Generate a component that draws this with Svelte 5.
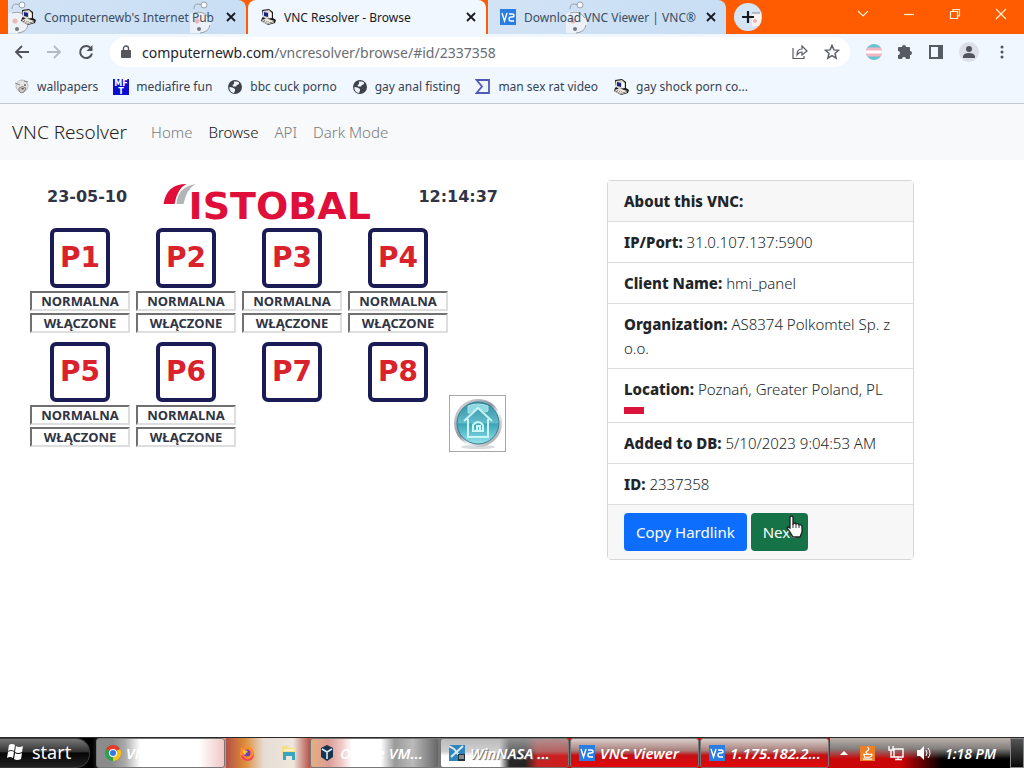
<script>
  const tabs = [
    { title: "Computernewb's Internet Pub", icon: 'pc', active: false, ghosts: [0, 182] },
    { title: 'VNC Resolver - Browse', icon: 'pc', active: true, ghosts: [] },
    { title: 'Download VNC Viewer | VNC®', icon: 'vnc', active: false, ghosts: [78] }
  ];
  const bookmarks = [
    { label: 'wallpapers', icon: 'face' },
    { label: 'mediafire fun', icon: 'mft' },
    { label: 'bbc cuck porno', icon: 'globe' },
    { label: 'gay anal fisting', icon: 'globe' },
    { label: 'man sex rat video', icon: 'sigma' },
    { label: 'gay shock porn co...', icon: 'pc' }
  ];
  const stations = [1, 2, 3, 4, 5, 6, 7, 8].map((n) => ({ name: 'P' + n, status: n < 7 }));
  const details = [
    ['IP/Port:', '31.0.107.137:5900'],
    ['Client Name:', 'hmi_panel'],
    ['Organization:', 'AS8374 Polkomtel Sp. z o.o.'],
    ['Location:', 'Poznań, Greater Poland, PL'],
    ['Added to DB:', '5/10/2023 9:04:53 AM'],
    ['ID:', '2337358']
  ];
</script>

{#snippet icon(name)}
  {#if name === 'pc'}
    <svg class="ico" viewBox="0 0 16 16" aria-hidden="true">
      <path d="M2 1 9 0l4 3v6l3 2-1 3-7 2-7-4 1-3 1-1z" fill="#1b1b1f" />
      <path d="M3 2l6-1 3 3v5l-6 1-3-2z" fill="#d9d7cd" />
      <path d="M4 3l4 1v4L4 7z" fill="#1b2288" />
      <path d="M9 3l2 1v4l-2 1z" fill="#fff" />
      <path d="M1.500 11l5-1.500 8 2.500-7 2.500z" fill="#ece9df" />
      <path d="M2 12.500l6 2.500 6-2" fill="none" stroke="#c9c6bb" />
      <path d="M4 11.500l5 1.500" stroke="#77746b" stroke-dasharray="1 1" />
    </svg>
  {:else if name === 'vnc'}
    <svg class="ico" viewBox="0 0 16 16" aria-hidden="true">
      <path fill="#2a7de1" d="M0 0h16v16H0z" />
      <path d="M2 4l2.500 8L7 4M9 5h3q2 0 2 1.500T12 8h-1q-2 0-2 2t2 2h3" fill="none" stroke="#fff" stroke-width="1.400" />
    </svg>
  {:else if name === 'face'}
    <svg class="ico" viewBox="0 0 16 16" aria-hidden="true">
      <circle cx="8" cy="7" r="6" fill="#e5e5e3" stroke="#bbbdbb" />
      <path d="M1 4l5 2M10 2l4 1M5 9q3-3 7 0l-2 4-3 1-2-2z" fill="#c9c7c4" stroke="#858582" />
      <path d="M7 9h3l-1 2z" fill="#555" /><circle cx="11" cy="6" r="1" fill="#666" />
    </svg>
  {:else if name === 'mft'}
    <svg class="ico" viewBox="0 0 16 16" aria-hidden="true">
      <path fill="#0b0bd2" d="M0 0h16v16H0z" />
      <text x="8" y="7" class="mft">MF</text><text x="8" y="15" class="mft">T</text>
    </svg>
  {:else if name === 'globe'}
    <svg class="ico" viewBox="0 0 16 16" aria-hidden="true">
      <circle cx="8" cy="8" r="7" fill="#3f4248" />
      <path d="M2.500 8l3 .5L8 10v1.500l-1 2.500C4 13.500 2 11 2.500 8zM7 2.500h3l2 1v1.500l-2 1-1 1.500H6L5.500 6 7 5z" fill="#eef4fc" />
    </svg>
  {:else if name === 'sigma'}
    <svg class="ico" viewBox="0 0 16 16" aria-hidden="true">
      <path d="M1.500 1H14v13H1.500L7 7.500z" fill="none" stroke="#5158b8" stroke-width="1.800" />
    </svg>
  {/if}
{/snippet}

{#snippet ghost()}
  <svg viewBox="0 0 22 34" width="22" height="34" aria-hidden="true">
    <path d="M0 14Q6 9 14 13q7 4 7 11-2 8-9 9H0z" fill="#f4f5f7" opacity=".8" />
    <path d="M4 9q0-5 4-5l6 1M4 13q9-3 15 5M10 33q9-1 10-8" fill="none" stroke="#9aa0a8" />
    <circle cx="14" cy="5" r="3" fill="#f5faff" stroke="#9aa0a8" />
    <circle cx="7" cy="21" r="2.500" fill="#efb5b8" /><circle cx="9" cy="29" r="2" fill="#74777c" />
  </svg>
{/snippet}

<div class="screen">
  <header>
    <div class="tabstrip">
      {#each tabs as tab}
        <div class="tab" class:active={tab.active}>
          {#each tab.ghosts as x}<span class="ghost" style="left:{x}px">{@render ghost()}</span>{/each}
          <span class="front">{@render icon(tab.icon)}</span>
          <span class="title front">{tab.title}</span>
          <button class="plain" aria-label="Close tab">
            <svg width="10" height="10" viewBox="0 0 10 10"><path d="M1 1l8 8M9 1L1 9" stroke="#17191d" stroke-width="1.800" /></svg>
          </button>
        </div>
      {/each}
      <button class="newtab" aria-label="New tab">
        <svg width="28" height="28" viewBox="0 0 28 28"><path d="M18 10h9v13h-9z" fill="#f7f3f3" /><path d="M18 10h8" stroke="#888" /><circle cx="21" cy="18" r="2" fill="#efb4a8" /><path d="M14 8v12M8 14h12" stroke="#17191d" stroke-width="2.200" /></svg>
      </button>
      <div class="window">
        <button class="plain" aria-label="Search tabs"><svg width="12" height="12" viewBox="0 0 12 12"><path d="M1 3l5 5 5-5" /></svg></button>
        <button class="plain" aria-label="Minimize"><svg width="12" height="12" viewBox="0 0 12 12"><path d="M1 6.500h10" /></svg></button>
        <button class="plain" aria-label="Restore"><svg width="12" height="12" viewBox="0 0 12 12"><path d="M1.500 3.500h7v7h-7zM4 3.500V1.500h6.500V8H9" /></svg></button>
        <button class="plain" aria-label="Close"><svg width="12" height="12" viewBox="0 0 12 12"><path d="M1 1l10 10M11 1L1 11" /></svg></button>
      </div>
    </div>

    <div class="toolbar">
      <button class="plain" aria-label="Back"><svg width="16" height="16" viewBox="0 0 16 16"><path d="M15 8H2M8 2L2 8l6 6" fill="none" stroke="#50545a" stroke-width="1.800" /></svg></button>
      <button class="plain" aria-label="Forward"><svg width="16" height="16" viewBox="0 0 16 16"><path d="M1 8h13M8 2l6 6-6 6" fill="none" stroke="#b6bbc1" stroke-width="1.800" /></svg></button>
      <button class="plain" aria-label="Reload"><svg width="16" height="16" viewBox="0 0 16 16"><path d="M13 4.500A6 6 0 1 0 14 9.500" fill="none" stroke="#50545a" stroke-width="2" /><path d="M14.500 1v6h-6z" fill="#50545a" /></svg></button>
      <div class="address">
        <svg width="10" height="14" viewBox="0 0 10 14" aria-hidden="true"><path d="M1 5h8q1 0 1 1v6q0 1-1 1H1q-1 0-1-1V6q0-1 1-1z" fill="#55575c" /><path d="M2.500 6V3.500a2.500 2.500 0 0 1 5 0V6" fill="none" stroke="#55575c" stroke-width="1.400" /></svg>
        <span class="url">computernewb.com<i>/vncresolver/browse/#id/2337358</i></span>
        <button class="plain" aria-label="Share"><svg width="16" height="16" viewBox="0 0 16 16"><path d="M1 4v10.500h11V12M5 11q0-6 5-6V2l5 5-5 4V8Q7 8 5 11z" fill="none" stroke="#5b5e63" stroke-width="1.200" /></svg></button>
        <button class="plain" aria-label="Bookmark"><svg width="16" height="16" viewBox="0 0 16 16"><path d="M8 1.500l1.900 4.400 4.700.4-3.600 3.100 1.100 4.700L8 11.600l-4.100 2.500L5 9.400 1.400 6.300l4.700-.4z" fill="none" stroke="#5b5e63" stroke-width="1.500" /></svg></button>
      </div>
      <div class="extensions">
        <button class="plain" aria-label="Flag extension"><svg width="16" height="16" viewBox="0 0 16 16"><clipPath id="disc"><circle cx="8" cy="8" r="8" /></clipPath><g clip-path="url(#disc)"><path fill="#6bc3d5" d="M0 0h16v16H0z" /><path fill="#f1b6c0" d="M0 3.500h16v9H0z" /><path fill="#fff" d="M0 6.500h16v3H0z" /></g></svg></button>
        <button class="plain" aria-label="Extensions"><svg width="16" height="16" viewBox="0 0 16 16"><path d="M5 3a2 2 0 0 1 4 0h3q1 0 1 1v3a2 2 0 0 1 0 4v3q0 1-1 1H9a2 2 0 0 0-4 0H2q-1 0-1-1v-3a2 2 0 0 0 0-4V4q0-1 1-1z" fill="#575b62" /></svg></button>
        <button class="plain" aria-label="Side panel"><svg width="16" height="16" viewBox="0 0 16 16"><path d="M2 2h12v12H2z" fill="none" stroke="#575b62" stroke-width="2" /><path d="M10 2h5v12h-5z" fill="#575b62" /></svg></button>
        <button class="plain profile" aria-label="Profile"><svg width="14" height="14" viewBox="0 0 14 14"><circle cx="7" cy="4" r="3" fill="#50545c" /><path d="M1 13v-2q1-3 6-3t6 3v2z" fill="#50545c" /></svg></button>
        <button class="plain" aria-label="Menu"><svg width="16" height="16" viewBox="0 0 16 16" fill="#50545a"><circle cx="8" cy="3" r="1.500" /><circle cx="8" cy="8" r="1.500" /><circle cx="8" cy="13" r="1.500" /></svg></button>
      </div>
    </div>

    <nav class="bookmarks">
      {#each bookmarks as b}<a href="#bookmark">{@render icon(b.icon)}{b.label}</a>{/each}
    </nav>
  </header>

  <div class="page">
    <nav class="sitenav">
      <a class="brand" href="#home">VNC Resolver</a>
      <a href="#home">Home</a>
      <a class="current" href="#browse">Browse</a>
      <a href="#api">API</a>
      <a href="#dark">Dark Mode</a>
    </nav>
    <main>
      <section class="panel">
        <div class="paneltop">
          <time>23-05-10</time>
          <div class="logo">
            <svg width="33" height="22" viewBox="0 0 32 22" aria-hidden="true"><path d="M0 20Q3 0 23 0 14 4 11 20z" fill="#df0f3a" /><path d="M13 20Q14 3 32 0 23 5 20 20z" fill="#b1b5b6" /></svg>
            <span>ISTOBAL</span>
          </div>
          <time>12:14:37</time>
        </div>
        <div class="panelbody">
          <div class="stations">
            {#each stations as s}
              <div class="station">
                <button>{s.name}</button>
                {#if s.status}<output>NORMALNA</output><output>WŁĄCZONE</output>{/if}
              </div>
            {/each}
          </div>
          <button class="homebtn" aria-label="Home">
            <svg width="55" height="55" viewBox="0 0 55 55">
              <defs>
                <linearGradient id="rim" x2="1" y2="1"><stop stop-color="#e5e8ec" /><stop offset=".45" stop-color="#8c949f" /><stop offset=".6" stop-color="#f4f5f6" /><stop offset="1" stop-color="#85878d" /></linearGradient>
                <linearGradient id="aqua" x2="0" y2="1"><stop stop-color="#2f8ea4" /><stop offset=".5" stop-color="#65bdcb" /><stop offset=".52" stop-color="#3aa4b8" /><stop offset="1" stop-color="#94e4eb" /></linearGradient>
              </defs>
              <ellipse cx="28" cy="51" rx="17" ry="2" fill="#d9dcde" />
              <circle cx="28" cy="27" r="24" fill="url(#rim)" /><circle cx="28" cy="27" r="21" fill="url(#aqua)" stroke="#3c7c8f" />
              <path d="M18 17v-7q10-4 20 0v5l-3 1-7-5-8 6z" fill="#8fd8e0" stroke="#a9e6ec" />
              <path d="M14 25l14-13 14 13M18 23v18h20V23M23 35v-6q5-6 10 0v6zM27 34v-4h3v4" fill="none" stroke="#c9f6f7" stroke-width="2" />
            </svg>
          </button>
        </div>
      </section>

      <section class="card">
        <h1>About this VNC:</h1>
        <dl>
          {#each details as [label, value]}
            <div>
              <dt>{label}</dt>
              <dd>{value}</dd>
              {#if label === 'Location:'}<span class="flag"></span>{/if}
            </div>
          {/each}
        </dl>
        <footer>
          <button class="copy">Copy Hardlink</button>
          <button class="next">Next
            <svg class="cursor" width="18" height="24" viewBox="0 0 18 24" aria-hidden="true"><path d="M4 2q2-2 3 0v7q2-2 3 0 2-1 3 1 3-1 3 2v5l-2 5H7l-3-5-3-4q1-2 3 0z" fill="#fff" stroke="#222" stroke-width="1.300" /><path d="M7 9v4m3-4v4m3-3v3" stroke="#333" /></svg>
          </button>
        </footer>
      </section>
    </main>
  </div>

  <div class="taskbar">
    <button class="start">
      <svg width="18" height="18" viewBox="0 0 18 18" aria-hidden="true" fill="#fff"><path d="M3 2q3-2 6 0L8 8Q5 6 2 8zM10 3q3 2 7 0l-1 6q-4 2-7 0zM2 9q3-2 6 0l-1 6q-3-2-6 0zM9 10q3 2 7 0l-1 6q-4 2-7 0z" /></svg>
      start
    </button>
    <button class="task chrome">
      <svg class="ico" viewBox="0 0 16 16" aria-hidden="true"><circle cx="8" cy="8" r="8" fill="#2ca24c" /><path d="M8 8L1 4a8 8 0 0 1 14 0z" fill="#e33b2e" /><path d="M8 8l7-4a8 8 0 0 1-7 12z" fill="#fbc116" /><circle cx="8" cy="8" r="4" fill="#fff" /><circle cx="8" cy="8" r="3" fill="#3478e5" /></svg>
      <span>VNC Res...</span>
    </button>
    <div class="quick">
      <button class="plain" aria-label="Firefox"><svg class="ico" viewBox="0 0 16 16"><path d="M2 4l1-2 2 2 3-1 1-3q5 3 6 8 0 8-7 8T1 9z" fill="#ff8b25" /><path d="M4 10q1 5 6 4 4-2 5-6 0 8-7 8-5-1-6-5z" fill="#ee3c5c" /><circle cx="8" cy="8" r="3.500" fill="#7040bb" /><path d="M4 5q4 0 5 2-2 0-3 3-3-2-2-5" fill="#ffc33d" /></svg></button>
      <button class="plain" aria-label="Explorer"><svg class="ico" viewBox="0 0 16 16"><path d="M1 1h6l1 2h7v8H1z" fill="#f6df88" /><path d="M2 15V7h12v8h-3v-4H5v4z" fill="#3ba5c0" /><path d="M3 5h10" stroke="#fff" /></svg></button>
    </div>
    <button class="task vbox">
      <svg class="ico" viewBox="0 0 16 16" aria-hidden="true"><path d="M8 0l6 3v9l-6 4-6-4V3z" fill="#17344f" /><path d="M3 4l5 3 5-3M8 7v7" fill="none" stroke="#d7ecf8" stroke-width="1.600" /></svg>
      <span>Oracle VM...</span>
    </button>
    <button class="task nasa">
      <svg class="ico" viewBox="0 0 16 16" aria-hidden="true"><path fill="#2f86bd" d="M0 0h16v16H0z" /><path d="M0 1l5 3 4 5 6 4M2 12L14 1" stroke="#d9eaf4" stroke-width="2" /><path d="M9 9h7v7H9z" fill="#26313a" /><path d="M10 11h5m-5 2h5" stroke="#eee" /></svg>
      <span>WinNASA ...</span>
    </button>
    <button class="task red">{@render icon('vnc')}<span>VNC Viewer</span></button>
    <button class="task red">{@render icon('vnc')}<span>1.175.182.2...</span></button>
    <div class="tray">
      <svg width="8" height="5" viewBox="0 0 8 5" aria-hidden="true"><path d="M0 4l4-4 4 4z" fill="#fff" /></svg>
      <svg width="15" height="15" viewBox="0 0 16 16" aria-hidden="true"><path fill="#ec7e26" d="M0 0h16v16H0z" /><path d="M8 1q3 2 0 4t0 3M4 9h7q3-1 1 2l-2 1H5zM3 14h10" fill="none" stroke="#fff" stroke-width="1.300" /></svg>
      <svg width="16" height="16" viewBox="0 0 16 16" aria-hidden="true"><path d="M6 4h9v8H6zM10 12v2M7 14.500h7M1 1v4h4V1M3 5v7h3" fill="none" stroke="#fff" stroke-width="1.400" /></svg>
      <svg width="16" height="16" viewBox="0 0 16 16" aria-hidden="true"><path d="M1 5h3l4-4v14l-4-4H1z" fill="#fff" /><path d="M10 5q2 3 0 6M12 3q4 5 0 10" fill="none" stroke="#fff" /></svg>
      <time>1:18 PM</time>
    </div>
    <button class="desktop" aria-label="Show desktop"></button>
  </div>
</div>

<style>
  :global(body) { margin: 0; }
  .screen, .screen * { box-sizing: border-box; }
  .screen { display: flex; flex-direction: column; min-height: 100vh; background: #fff; font-family: "Noto Sans", "Open Sans", sans-serif; }
  button { font-family: inherit; cursor: pointer; }
  a { text-decoration: none; }
  svg { display: block; flex: none; }
  .plain { display: grid; place-items: center; padding: 0; border: 0; background: none; }
  .ico { width: 16px; height: 16px; }
  .mft { fill: #fff; font: bold 8px "DejaVu Sans", sans-serif; text-anchor: middle; }

  .tabstrip { display: flex; height: 34px; padding-left: 8px; gap: 2px; background: #ff5b00; }
  .tab { position: relative; display: flex; align-items: center; gap: 8px; flex: 0 1 238px; min-width: 0; padding: 0 10px 0 12px; border-radius: 0 8px 0 0; background: linear-gradient(90deg, #d2e3f5, #c8def4); color: #3c4c60; font-size: 12px; }
  .tab.active { border-radius: 8px 8px 0 0; background: #f1f7fe; color: #17191d; }
  .front { position: relative; }
  .title { flex: 1; overflow: hidden; white-space: nowrap; }
  .ghost { position: absolute; top: 0; }
  .newtab { align-self: center; margin-left: 6px; width: 28px; height: 28px; padding: 0; border: 0; border-radius: 50%; background: #d5e5f5; overflow: hidden; }
  .window { display: flex; gap: 34px; margin-left: auto; padding: 0 17px 6px 0; }
  .window path { fill: none; stroke: #fff0cf; stroke-width: 1.2; }

  .toolbar { display: flex; align-items: center; height: 36px; padding-left: 14px; gap: 16px; background: #f1f7fe; }
  .address { display: flex; align-items: center; flex: 1; min-width: 0; height: 30px; padding: 0 10px 0 11px; gap: 16px; border-radius: 15px; background: #fff; }
  .url { flex: 1; margin-left: -5px; overflow: hidden; color: #24262b; font-size: 14px; white-space: nowrap; }
  .url i { color: #696d73; font-style: normal; }
  .extensions { display: flex; align-items: center; gap: 15px; padding-right: 14px; }
  .profile { width: 20px; height: 20px; border-radius: 50%; background: #dcdfe5; }
  .bookmarks { display: flex; align-items: center; height: 34px; padding: 0 14px; gap: 15px; border-bottom: 1px solid #c5cad2; background: #f1f7fe; }
  .bookmarks a { display: flex; align-items: center; gap: 7px; color: #354253; font-size: 12px; white-space: nowrap; }

  .page { flex: 1; font-weight: 300; }
  .sitenav { display: flex; align-items: center; height: 56px; padding: 0 12px; gap: 16px; background: #f8f9fa; font-size: 15px; }
  .sitenav a { color: #77797b; }
  .sitenav .brand { margin-right: 8px; color: #222; font-size: 19px; }
  .sitenav .current { color: #111; }
  main { display: flex; align-items: flex-start; justify-content: space-between; gap: 24px; padding: 20px 110px 20px 30px; }

  .panel { font-family: "DejaVu Sans", sans-serif; }
  .paneltop { display: flex; justify-content: space-between; height: 48px; padding: 4px 8px 0 17px; color: #303445; font-size: 16px; font-weight: bold; line-height: 26px; }
  .logo { display: flex; margin-right: 12px; color: #df0f3a; font-size: 38px; line-height: 45px; }
  .logo span { margin-left: -7px; }
  .panelbody { display: flex; align-items: flex-end; gap: 1px; }
  .stations { display: grid; grid-template-columns: repeat(4, 100px); gap: 9px 6px; }
  .station { display: flex; flex-direction: column; align-items: center; gap: 2px; }
  .station button { width: 60px; height: 60px; margin-bottom: 1px; padding: 0; border: 4px solid #1b1c55; border-radius: 6px; background: #fff; color: #d9222c; font-size: 28px; font-weight: bold; line-height: 52px; }
  output { width: 100%; height: 20px; border: 2px solid; border-color: #707070 #dedede #dedede #707070; color: #303445; font: bold 13px/16px "Noto Sans", sans-serif; text-align: center; }
  .homebtn { width: 57px; height: 57px; margin-bottom: -5px; padding: 0; border: 1px solid #a7a7a7; background: #fff; }

  .card { flex: 0 0 307px; border: 1px solid #d7d7d7; border-radius: 4px; color: #212529; font-size: 15px; line-height: 24px; }
  h1, dl, dd { margin: 0; }
  h1 { padding: 8px 16px; background: #f7f7f7; font-size: 15px; font-weight: 800; line-height: 24px; }
  dl div { padding: 8px 16px; border-top: 1px solid #dcdcdc; }
  dt, dd { display: inline; }
  dt { font-weight: 800; }
  .flag { display: block; width: 20px; height: 13px; background: linear-gradient(#fff 6px, #dc143c 6px); }
  footer { display: flex; gap: 4px; padding: 8px 16px; border-top: 1px solid #dcdcdc; background: #f7f7f7; }
  footer button { position: relative; height: 38px; padding: 0 12px; border: 0; border-radius: 4px; color: #fff; font-size: 15px; white-space: nowrap; }
  .copy { background: #0d6efd; }
  .next { background: #157347; }
  .cursor { position: absolute; left: 35px; top: 2px; }

  .taskbar { display: flex; height: 31px; border-top: 1px solid #292929; background: linear-gradient(90deg, #000 9%, #eee 13%, #f7e4e2 21%, #b83a2c 23%, #eee 26%, #c7554b 31%, #fff 35%, #777 43%, #fff 46%, #333 52%, #d50b0d 56%, #c90507 88%, #000 92%); color: #fff; }
  .start { display: flex; align-items: center; gap: 8px; flex: none; width: 90px; padding: 0 0 2px 6px; border: 1px solid #3a3a3a; border-left: 0; border-radius: 0 14px 14px 0; background: linear-gradient(#777, #333 45%, #050505 50%, #222); color: #fff; font-size: 18px; }
  .task { display: flex; align-items: center; gap: 5px; flex: 0 1 129px; min-width: 0; margin-right: 1px; padding: 0 8px; border: 1px solid #777; border-radius: 3px; color: #fff; font-size: 15px; font-style: italic; font-weight: 600; white-space: nowrap; overflow: hidden; }
  .chrome { margin-left: 6px; background: linear-gradient(90deg, #8b8b8b 12%, #aaa 22%, #fff 34%, #fff 80%, #eec7c4); }
  .quick { display: flex; align-items: center; justify-content: space-around; flex: 0 1 84px; background: linear-gradient(90deg, #b55048, #db8b37 22%, #e6dcd6 45%, #eee7dc 80%, #b65049); }
  .vbox { background: linear-gradient(90deg, #e5ae82, #dc9d98 14%, #f0c8c5 24%, #fff 32%, #fff 55%, #999 66%, #bbb 80%, #666); }
  .nasa { background: linear-gradient(rgba(170, 170, 170, .8), rgba(160, 160, 160, .5) 45%, transparent 60%), linear-gradient(90deg, #fff 46%, #292929 54%, #222 66%, #c42424 76%, #d01c1c); text-shadow: 1px 1px 1px #666; }
  .red { background: linear-gradient(#d9cfcc, #a77d79 42%, #c31015 58%, #e30609); }
  .tray { display: flex; align-items: center; justify-content: space-between; flex: 1; padding: 0 14px 0 10px; background: linear-gradient(#bbb2ac, #84807e 35%, transparent 70%); font-size: 14px; font-style: italic; font-weight: 600; }
  .desktop { flex: none; width: 14px; border: 1px solid #888; background: linear-gradient(#555, #090909); }
</style>
